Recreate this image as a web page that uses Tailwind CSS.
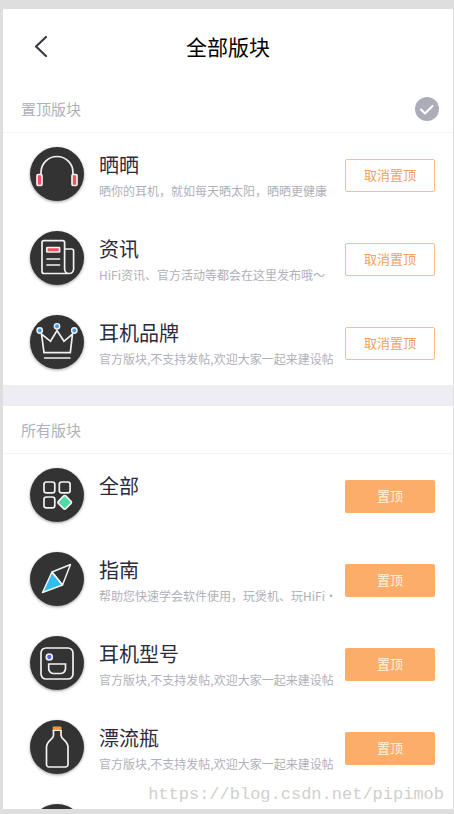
<!DOCTYPE html>
<html lang="zh-CN">
<head>
<meta charset="utf-8">
<meta name="viewport" content="width=device-width, initial-scale=1">
<title>全部版块</title>
<script src="https://cdn.jsdelivr.net/npm/@tailwindcss/browser@4"></script>
</head>
<body class="h-screen overflow-hidden bg-[#dedede] pt-[9px] pr-px pb-[5px] pl-[3px] font-['Noto_Sans_CJK_SC',sans-serif]">
<div class="relative h-full overflow-hidden bg-white">
  <header class="grid h-19 grid-cols-[76px_1fr_76px] items-center pb-0.5">
    <button type="button" aria-label="返回" class="flex h-10 items-center justify-center">
      <svg class="size-6" viewBox="0 0 24 24" fill="none" stroke="#3a3a45" stroke-width="2.2" stroke-linecap="round" stroke-linejoin="round"><path d="M17 3 7 12.500 17 22"/></svg>
    </button>
    <h1 class="text-center text-[21px] leading-7 text-black">全部版块</h1>
  </header>

  <main>
    <section>
      <div class="flex h-12 items-center justify-between border-b border-[#f3f3f5] pr-[14px] pl-[18px]">
        <h2 class="text-[15px] leading-6 text-[#b0b0bc]">置顶版块</h2>
        <button type="button" aria-label="完成">
          <svg class="size-6" viewBox="0 0 24 24" fill="none"><circle cx="12" cy="12" r="12" fill="#adadba"/><path d="m6 12.500 4 4 7.500-7.500" stroke="#fff" stroke-width="2" stroke-linecap="round" stroke-linejoin="round"/></svg>
        </button>
      </div>
      <ul>
        <li class="flex h-21 items-center py-3.5 pr-[18px] pl-[27px]">
          <svg class="size-[54px] shrink-0 self-start rounded-full bg-[#333] shadow-[0_1px_3px_rgba(0,0,0,0.4)]" viewBox="0 0 54 54" fill="none" stroke="#f2f2f2" stroke-width="1.700"><path d="M11 27.500v-2a16 16 0 0 1 32 0v2"/><rect x="7" y="27.500" width="5" height="11" rx="1.200" fill="#f4505f"/><rect x="42" y="27.500" width="5" height="11" rx="1.200" fill="#f4505f"/></svg>
          <div class="mr-3 ml-[15px] min-w-0 flex-1 self-start overflow-hidden pt-1 whitespace-nowrap">
            <h3 class="text-[20px] leading-7 text-[#2b2b3a]">晒晒</h3>
            <p class="mt-[3px] text-xs leading-[18px] text-[#b0b0ba]">晒你的耳机，就如每天晒太阳，晒晒更健康</p>
          </div>
          <button type="button" class="h-[33px] w-[90px] shrink-0 rounded-[2px] border border-[#f4c08e] text-[13px] text-[#f5a05c]">取消置顶</button>
        </li>
        <li class="flex h-21 items-center py-3.5 pr-[18px] pl-[27px]">
          <svg class="size-[54px] shrink-0 self-start rounded-full bg-[#333] shadow-[0_1px_3px_rgba(0,0,0,0.4)]" viewBox="0 0 54 54" fill="none" stroke="#f2f2f2" stroke-width="1.700" stroke-linecap="round"><path d="M39 42.500H14a2 2 0 0 1-2-2V11.500a1.800 1.800 0 0 1 1.800-1.800h19a1.800 1.800 0 0 1 1.800 1.800V38a4.500 4.500 0 0 0 9 0V20a2 2 0 0 0-2-2h-6.500"/><rect x="16.800" y="16.500" width="12.800" height="4.500" rx="0.500" fill="#f4505f"/><path d="M17 28h12.500M17 34h12.500"/></svg>
          <div class="mr-3 ml-[15px] min-w-0 flex-1 self-start overflow-hidden pt-1 whitespace-nowrap">
            <h3 class="text-[20px] leading-7 text-[#2b2b3a]">资讯</h3>
            <p class="mt-[3px] text-xs leading-[18px] text-[#b0b0ba]">HiFi资讯、官方活动等都会在这里发布哦～</p>
          </div>
          <button type="button" class="h-[33px] w-[90px] shrink-0 rounded-[2px] border border-[#f4c08e] text-[13px] text-[#f5a05c]">取消置顶</button>
        </li>
        <li class="flex h-21 items-center py-3.5 pr-[18px] pl-[27px]">
          <svg class="size-[54px] shrink-0 self-start rounded-full bg-[#333] shadow-[0_1px_3px_rgba(0,0,0,0.4)]" viewBox="0 0 54 54" fill="none" stroke="#f2f2f2" stroke-width="1.700"><path d="M11.500 19 14 37.700h26.300L42.500 19 34 26.300 27 15.500l-6.500 10.800zM14 43h26.500"/><g fill="#3fa0f0" stroke-width="1.400"><circle cx="9.700" cy="15.500" r="2.700"/><circle cx="27" cy="11.300" r="2.700"/><circle cx="44.300" cy="15.500" r="2.700"/></g></svg>
          <div class="mr-3 ml-[15px] min-w-0 flex-1 self-start overflow-hidden pt-1 whitespace-nowrap">
            <h3 class="text-[20px] leading-7 text-[#2b2b3a]">耳机品牌</h3>
            <p class="mt-[3px] text-xs leading-[18px] text-[#b0b0ba]">官方版块,不支持发帖,欢迎大家一起来建设帖</p>
          </div>
          <button type="button" class="h-[33px] w-[90px] shrink-0 rounded-[2px] border border-[#f4c08e] text-[13px] text-[#f5a05c]">取消置顶</button>
        </li>
      </ul>
    </section>

    <section class="border-t-[21px] border-[#eeedf4]">
      <div class="flex h-12 items-center border-b border-[#f3f3f5] pl-[18px]">
        <h2 class="text-[15px] leading-6 text-[#b0b0bc]">所有版块</h2>
      </div>
      <ul>
        <li class="flex h-21 items-center py-3.5 pr-[18px] pl-[27px]">
          <svg class="size-[54px] shrink-0 self-start rounded-full bg-[#333] shadow-[0_1px_3px_rgba(0,0,0,0.4)]" viewBox="0 0 54 54" fill="none" stroke="#f2f2f2" stroke-width="1.700"><rect x="14" y="14" width="10.800" height="10.800" rx="2.400"/><rect x="29.300" y="14" width="10.800" height="10.800" rx="2.400"/><rect x="14" y="29" width="10.800" height="10.800" rx="2.400"/><rect x="29.500" y="29.100" width="10.400" height="10.400" rx="1.800" fill="#4fdba4" transform="rotate(45 34.700 34.300)"/></svg>
          <div class="mr-3 ml-[15px] min-w-0 flex-1 self-start overflow-hidden pt-1 whitespace-nowrap">
            <h3 class="text-[20px] leading-7 text-[#2b2b3a]">全部</h3>
          </div>
          <button type="button" class="h-[33px] w-[90px] shrink-0 rounded-[2px] bg-[#fbad69] text-[13px] text-[#fff3dc]">置顶</button>
        </li>
        <li class="flex h-21 items-center py-3.5 pr-[18px] pl-[27px]">
          <svg class="size-[54px] shrink-0 self-start rounded-full bg-[#333] shadow-[0_1px_3px_rgba(0,0,0,0.4)]" viewBox="0 0 54 54" fill="none" stroke="#f2f2f2" stroke-width="1.500" stroke-linejoin="round"><path d="m22 20-9.500 20.500L32.500 33z" fill="#2fbdf0"/><path d="M22 20 40.500 12.500 32.500 33z"/></svg>
          <div class="mr-3 ml-[15px] min-w-0 flex-1 self-start overflow-hidden pt-1 whitespace-nowrap">
            <h3 class="text-[20px] leading-7 text-[#2b2b3a]">指南</h3>
            <p class="mt-[3px] text-xs leading-[18px] text-[#b0b0ba]">帮助您快速学会软件使用，玩煲机、玩HiFi·</p>
          </div>
          <button type="button" class="h-[33px] w-[90px] shrink-0 rounded-[2px] bg-[#fbad69] text-[13px] text-[#fff3dc]">置顶</button>
        </li>
        <li class="flex h-21 items-center py-3.5 pr-[18px] pl-[27px]">
          <svg class="size-[54px] shrink-0 self-start rounded-full bg-[#333] shadow-[0_1px_3px_rgba(0,0,0,0.4)]" viewBox="0 0 54 54" fill="none" stroke="#f2f2f2" stroke-width="1.700"><rect x="11" y="12" width="32" height="31" rx="5"/><circle cx="19.300" cy="21" r="3" fill="#5c5cf0"/><path d="M18.700 28h16.800v4.500a5 5 0 0 1-5 5h-6.800a5 5 0 0 1-5-5z"/></svg>
          <div class="mr-3 ml-[15px] min-w-0 flex-1 self-start overflow-hidden pt-1 whitespace-nowrap">
            <h3 class="text-[20px] leading-7 text-[#2b2b3a]">耳机型号</h3>
            <p class="mt-[3px] text-xs leading-[18px] text-[#b0b0ba]">官方版块,不支持发帖,欢迎大家一起来建设帖</p>
          </div>
          <button type="button" class="h-[33px] w-[90px] shrink-0 rounded-[2px] bg-[#fbad69] text-[13px] text-[#fff3dc]">置顶</button>
        </li>
        <li class="flex h-21 items-center py-3.5 pr-[18px] pl-[27px]">
          <svg class="size-[54px] shrink-0 self-start rounded-full bg-[#333] shadow-[0_1px_3px_rgba(0,0,0,0.4)]" viewBox="0 0 54 54" fill="none" stroke="#f2f2f2" stroke-width="1.700"><path d="M23.500 10v5.500c0 3.500-7 5.500-7 11.500v17.500a2.500 2.500 0 0 0 2.500 2.500h16.500a2.500 2.500 0 0 0 2.500-2.500V27c0-6-7-8-7-11.500V10"/><rect x="22.700" y="6.500" width="8.800" height="4" rx="1" fill="#f39a35" stroke="none"/><path d="M22.500 10.500h9.200" stroke-width="1"/></svg>
          <div class="mr-3 ml-[15px] min-w-0 flex-1 self-start overflow-hidden pt-1 whitespace-nowrap">
            <h3 class="text-[20px] leading-7 text-[#2b2b3a]">漂流瓶</h3>
            <p class="mt-[3px] text-xs leading-[18px] text-[#b0b0ba]">官方版块,不支持发帖,欢迎大家一起来建设帖</p>
          </div>
          <button type="button" class="h-[33px] w-[90px] shrink-0 rounded-[2px] bg-[#fbad69] text-[13px] text-[#fff3dc]">置顶</button>
        </li>
        <li class="flex h-21 items-center py-3.5 pr-[18px] pl-[27px]">
          <svg class="size-[54px] shrink-0 self-start rounded-full bg-[#333] shadow-[0_1px_3px_rgba(0,0,0,0.4)]" viewBox="0 0 54 54"></svg>
        </li>
      </ul>
    </section>
  </main>
  <p class="absolute right-[9px] bottom-0.5 font-['Liberation_Mono',monospace] text-[17px] leading-6 text-[#d0d0cb]">https://blog.csdn.net/pipimob</p>
</div>
</body>
</html>
